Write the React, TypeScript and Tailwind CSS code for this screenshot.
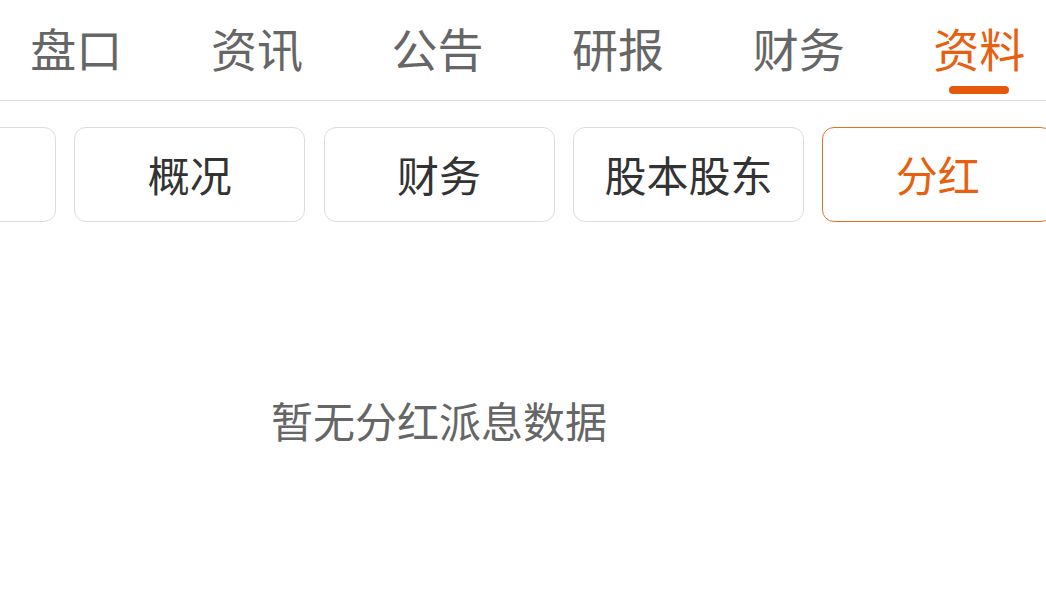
const tabs = ['盘口', '资讯', '公告', '研报', '财务', '资料']
const subTabs = ['', '概况', '财务', '股本股东', '分红']

export default function App() {
  const activeTab = 5
  const activeSub = 4
  return (
    <div
      className="w-[1046px] h-[598px] overflow-hidden bg-white"
      style={{ fontFamily: '"Noto Sans CJK SC", "Noto Sans", sans-serif' }}
    >
      {/* top tabs */}
      <div className="h-[101px] border-b border-[#dcdce0] overflow-hidden">
        <div className="flex -ml-[14px]">
          {tabs.map((t, i) => (
            <div key={t} className="relative w-[180.6px] h-[100px] shrink-0 flex justify-center pt-[24px]">
              <span
                className={
                  'text-[46px] leading-none ' + (i === activeTab ? 'text-[#e8600f]' : 'text-[#666666]')
                }
              >
                {t}
              </span>
              {i === activeTab && (
                <div className="absolute bottom-[6px] left-1/2 -translate-x-1/2 w-[60px] h-[8px] rounded-full bg-[#e6580a]" />
              )}
            </div>
          ))}
        </div>
      </div>

      {/* sub tabs */}
      <div className="flex gap-[18.3px] mt-[26px] -ml-[175px]">
        {subTabs.map((t, i) => (
          <div
            key={t + i}
            className={
              'w-[231px] h-[95px] shrink-0 rounded-[12px] border flex items-center justify-center pb-[2px] text-[42px] leading-none ' +
              (i === activeSub ? 'border-[#e8702a] text-[#e8600f]' : 'border-[#dcdce0] text-[#333333]')
            }
          >
            {t}
          </div>
        ))}
      </div>

      {/* empty state */}
      <div className="w-[878px] mt-[177px] text-center text-[42px] leading-none text-[#666666]">
        暂无分红派息数据
      </div>
    </div>
  )
}
